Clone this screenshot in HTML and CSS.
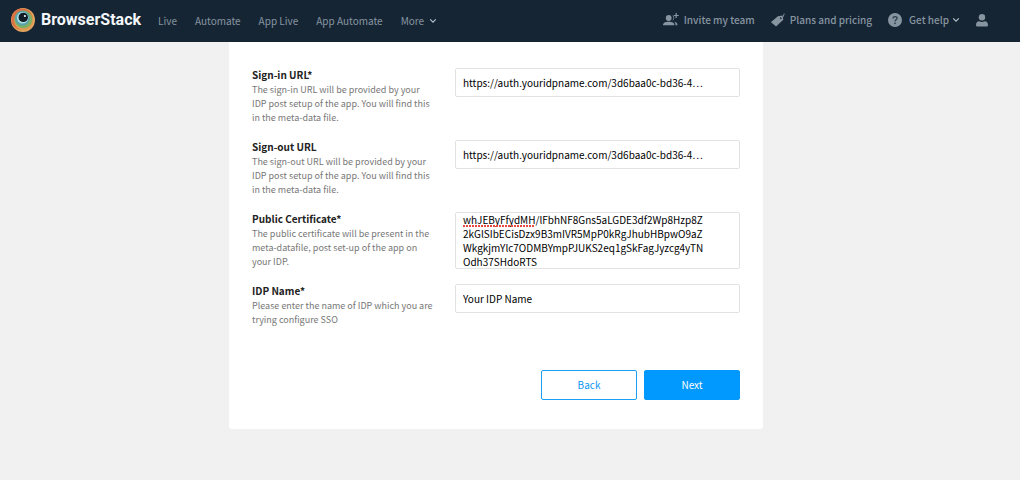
FILE: index.html
```html
<!DOCTYPE html>
<html lang="en">
<head>
<meta charset="utf-8">
<title>BrowserStack SSO setup</title>
<link rel="stylesheet" href="styles.css">
</head>
<body>
<header class="topbar">
  <a class="brand" href="#">
    <svg class="brand-eye" viewBox="0 0 24 24" aria-hidden="true">
      <circle cx="12" cy="12" r="12" fill="#e3a45c"/>
      <circle cx="11.2" cy="11.3" r="10.8" fill="#dc6f43"/>
      <circle cx="12.6" cy="12.6" r="9.6" fill="#dd9a54"/>
      <circle cx="12.4" cy="11.4" r="8.9" fill="#7fb062"/>
      <circle cx="11.4" cy="10.2" r="7.5" fill="#58a2a5"/>
      <circle cx="11.6" cy="9.8" r="5.8" fill="#a9dbe4"/>
      <circle cx="12.3" cy="9.4" r="4.7" fill="#101c26"/>
      <circle cx="13.9" cy="8" r="1.1" fill="#e8f4f6"/>
    </svg>
    <span class="brand-name">BrowserStack</span>
  </a>
  <nav class="products">
    <a href="#">Live</a>
    <a href="#">Automate</a>
    <a href="#">App Live</a>
    <a href="#">App Automate</a>
    <a class="with-arrow" href="#">More
      <svg class="arrow" viewBox="0 0 8 6" aria-hidden="true"><path d="M1.2 1.4 4 4.2 6.8 1.4"/></svg>
    </a>
  </nav>
  <nav class="account">
    <a href="#">
      <svg class="icon-team" viewBox="0 0 16 14" aria-hidden="true">
        <circle cx="5.7" cy="5" r="2.9"/>
        <path d="M0 12.3C0 9.6 2 8.7 5.7 8.7s5.7.9 5.7 3.6z"/>
        <path d="M9.2 2.2a2.9 2.9 0 0 1 0 5.6 4 4 0 0 0 0-5.6zM11.3 8.7c2.1.3 3.2 1.4 3.2 3.6h-2c0-1.7-.4-2.7-1.2-3.6z"/>
        <path d="M12.6 0h1.2v1.9h1.9v1.2h-1.9V5h-1.2V3.1h-1.9V1.9h1.9z"/>
      </svg>
      Invite my team
    </a>
    <a href="#">
      <svg class="icon-tag" viewBox="0 0 14 14" aria-hidden="true">
        <path fill-rule="evenodd" d="M.4 8.7 6.9 3.3 11.6 2.6 12.3 6.8 5.6 12.9Q5 13.4 4.5 12.9L.3 9.6Q-.1 9.1.4 8.7zM9.8 4.3a1 1 0 1 0 .1 2 1 1 0 0 0-.1-2z"/>
        <path d="M9.8 5.3Q13 4.5 13.2.5" fill="none" stroke="currentColor" stroke-width=".9"/>
      </svg>
      Plans and pricing
    </a>
    <a class="help" href="#">
      <svg class="icon-help" viewBox="0 0 14 14" aria-hidden="true">
        <circle cx="7" cy="7" r="7"/>
        <path d="M5 5.5C5 4.2 5.9 3.6 7 3.6s2.1.7 2.1 1.7C9.1 6.7 7 6.7 7 8.4" fill="none" stroke="#2c3e4d" stroke-width="1.3"/>
        <circle cx="7" cy="10.3" r=".9" fill="#2c3e4d"/>
      </svg>
      Get help
      <svg class="arrow" viewBox="0 0 8 6" aria-hidden="true"><path d="M1.2 1.4 4 4.2 6.8 1.4"/></svg>
    </a>
    <a href="#" aria-label="Account">
      <svg class="icon-user" viewBox="0 0 12 13" aria-hidden="true">
        <circle cx="6" cy="3.3" r="3.2"/>
        <path d="M0 11.2C0 8.5 1.3 7.3 3.2 7.3Q6 8.8 8.8 7.3c1.9 0 3.2 1.2 3.2 3.9q0 1.3-1.2 1.3H1.2Q0 12.5 0 11.2z"/>
      </svg>
    </a>
  </nav>
</header>
<main class="page">
  <form class="card">
    <div class="field">
      <div>
        <label class="field-name" for="signin">Sign-in URL*</label>
        <p class="hint">The sign-in URL will be provided by your IDP post setup of the app. You will find this in the meta-data file.</p>
      </div>
      <input class="control" id="signin" type="text" value="https://auth.youridpname.com/3d6baa0c-bd36-4…">
    </div>
    <div class="field">
      <div>
        <label class="field-name" for="signout">Sign-out URL</label>
        <p class="hint">The sign-out URL will be provided by your IDP post setup of the app. You will find this in the meta-data file.</p>
      </div>
      <input class="control" id="signout" type="text" value="https://auth.youridpname.com/3d6baa0c-bd36-4…">
    </div>
    <div class="field">
      <div>
        <label class="field-name" for="cert">Public Certificate*</label>
        <p class="hint">The public certificate will be present in the meta-datafile, post set-up of the app on your IDP.</p>
      </div>
      <div class="cert">
        <textarea class="control cert-text" id="cert" rows="4" spellcheck="false">whJEByFfydMH/lFbhNF8Gns5aLGDE3df2Wp8Hzp8Z
2kGlSIbECisDzx9B3mIVR5MpP0kRgJhubHBpwO9aZ
WkgkjmYlc7ODMBYmpPJUKS2eq1gSkFagJyzcg4yTN
Odh37SHdoRTS</textarea>
        <span class="spelling-mark"></span>
      </div>
    </div>
    <div class="field">
      <div>
        <label class="field-name" for="idp">IDP Name*</label>
        <p class="hint">Please enter the name of IDP which you are trying configure SSO</p>
      </div>
      <input class="control" id="idp" type="text" value="Your IDP Name">
    </div>
    <div class="actions">
      <button class="btn" type="button">Back</button>
      <button class="btn btn-primary" type="submit">Next</button>
    </div>
  </form>
</main>
</body>
</html>
```
FILE: styles.css
```css
* {
  box-sizing: border-box;
}

body {
  margin: 0;
  background: #f1f1f1;
  color: #222;
  font-family: "Noto Sans CJK SC", "Noto Sans", sans-serif;
  font-size: 10px;
  line-height: 14px;
}

a {
  color: inherit;
  text-decoration: none;
}

svg {
  display: block;
  flex: none;
  fill: currentColor;
}

.topbar {
  display: flex;
  align-items: center;
  height: 42px;
  padding: 0 32px 2px 11px;
  background: #162534;
  color: #8795a1;
}

.brand {
  display: flex;
  align-items: center;
  gap: 6px;
  margin-right: 17px;
}

.brand-eye {
  width: 24px;
  height: 24px;
}

.brand-name {
  color: #f4f7f9;
  font-family: Roboto, sans-serif;
  font-size: 16px;
  font-weight: 700;
  line-height: 20px;
}

.products,
.account {
  display: flex;
  align-items: center;
  white-space: nowrap;
}

.products {
  gap: 18px;
  padding-top: 2px;
}

.account {
  gap: 16px;
  margin-left: auto;
  font-weight: 500;
}

.account a,
.products .with-arrow {
  display: flex;
  align-items: center;
  gap: 5px;
}

.account .help {
  gap: 7px;
}

.help .arrow {
  margin-left: -4px;
}

.arrow {
  width: 8px;
  height: 6px;
  fill: none;
  stroke: #b3c0ca;
  stroke-width: 1.2;
}

.icon-team {
  width: 16px;
  height: 14px;
}

.icon-tag,
.icon-help {
  width: 14px;
  height: 14px;
}

.icon-user {
  width: 12px;
  height: 13px;
}

.page {
  padding-right: 28px;
}

.card {
  display: flex;
  flex-direction: column;
  gap: 15px;
  max-width: 534px;
  margin: 0 auto;
  padding: 26px 23px 29px;
  background: #fff;
  border-radius: 0 0 3px 3px;
}

.field {
  display: grid;
  grid-template-columns: 184px 1fr;
  column-gap: 19px;
  align-items: start;
}

.field-name {
  display: block;
  color: #222;
  font-weight: 700;
}

.hint {
  margin: 1px 0 0;
  color: #777;
  font-size: 9px;
}

.control {
  display: block;
  width: 100%;
  height: 29px;
  margin: 0;
  padding: 0 7px;
  border: 1px solid #e2e2e2;
  border-radius: 2px;
  background: #fff;
  color: #000;
  font: inherit;
}

.cert {
  position: relative;
}

.cert-text {
  height: 57px;
  overflow: hidden;
  resize: none;
}

.spelling-mark {
  position: absolute;
  top: 13px;
  left: 8px;
  width: 72px;
  height: 2px;
  background: repeating-linear-gradient(to right, #e8483f 0 2px, transparent 2px 3px);
}

.actions {
  display: flex;
  justify-content: flex-end;
  gap: 7px;
  padding-top: 28px;
}

.btn {
  width: 96px;
  height: 30px;
  padding: 0;
  border: 1px solid #1a9ff5;
  border-radius: 2px;
  background: #fff;
  color: #0e96f2;
  font: inherit;
}

.btn-primary {
  background: #0299fe;
  border-color: #0299fe;
  color: #fff;
}
```
